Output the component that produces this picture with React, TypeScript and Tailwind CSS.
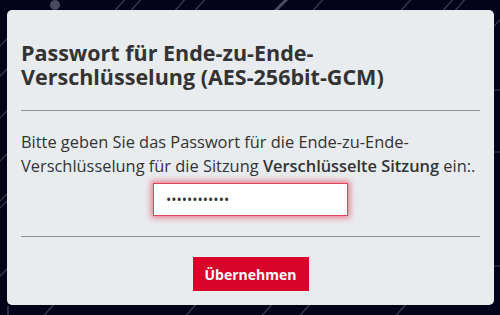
import React from 'react';

const BgLines: React.FC = () => (
  <svg className="absolute inset-0 w-full h-full" viewBox="0 0 500 315" aria-hidden>
    <g stroke="#3b3e55" strokeWidth="1.2" strokeLinecap="round">
      <line x1="112" y1="14" x2="128" y2="-4" />
      <line x1="128" y1="14" x2="144" y2="-4" />
      <line x1="172" y1="14" x2="188" y2="-4" />
      <line x1="192" y1="14" x2="208" y2="-4" />
      <line x1="310" y1="14" x2="326" y2="-4" />
      <line x1="398" y1="14" x2="414" y2="-4" />
      <line x1="440" y1="14" x2="456" y2="-4" />
      <line x1="452" y1="14" x2="468" y2="-4" />
      <line x1="40" y1="320" x2="56" y2="302" />
      <line x1="182" y1="320" x2="198" y2="302" />
      <line x1="258" y1="320" x2="274" y2="302" />
      <line x1="296" y1="320" x2="312" y2="302" />
      <line x1="392" y1="320" x2="408" y2="302" />
      <line x1="-4" y1="50" x2="10" y2="36" />
      <line x1="-4" y1="80" x2="10" y2="66" />
      <line x1="-4" y1="122" x2="10" y2="108" />
      <line x1="-4" y1="165" x2="10" y2="151" />
      <line x1="-4" y1="205" x2="10" y2="191" />
      <line x1="-4" y1="212" x2="10" y2="198" />
      <line x1="-4" y1="280" x2="10" y2="266" />
      <line x1="490" y1="30" x2="504" y2="16" />
      <line x1="492" y1="90" x2="504" y2="90" />
      <line x1="492" y1="152" x2="504" y2="152" />
      <line x1="492" y1="266" x2="504" y2="266" />
    </g>
    <line x1="272" y1="14" x2="290" y2="-4" stroke="#4a4d62" strokeWidth="3" />
    <circle cx="55" cy="5" r="5" fill="#474a5e" />
    <line x1="8" y1="306" x2="8" y2="315" stroke="#3b3e55" strokeWidth="1.5" />
  </svg>
);

export default function App() {
  return (
    <div
      className="relative w-[500px] h-[315px] overflow-hidden bg-[#03041a] pt-[10px] px-[7px]"
      style={{ fontFamily: '"Open Sans", "Noto Sans", sans-serif' }}
    >
      <BgLines />
      <div className="relative w-[487px] h-[295px] rounded-[5px] bg-[#e9ecef] pt-[31px] pl-[14px] pr-[14px] text-[#333333]">
        <h1 className="text-[21.5px] leading-[24px] font-bold">
          Passwort für Ende-zu-Ende-
          <br />
          Verschlüsselung (AES-256bit-GCM)
        </h1>
        <div className="mt-[21px] border-t border-[#8f8f8f]" />
        <p className="mt-[19px] text-[16.4px] leading-[24px]">
          Bitte geben Sie das Passwort für die Ende-zu-Ende-
          <br />
          Verschlüsselung für die Sitzung <span className="font-semibold">Verschlüsselte Sitzung</span> ein:.
        </p>
        <div className="flex justify-center mt-[5px]">
          <input
            type="password"
            readOnly
            value="123456789012"
            className="w-[195px] h-[33px] bg-white border border-[#e0455c] px-[12px] text-[14px] text-[#333] outline-none shadow-[0_0_6px_2px_rgba(225,35,65,0.55)]"
          />
        </div>
        <div className="mt-[20px] border-t border-[#8f8f8f]" />
        <div className="flex justify-center mt-[20px]">
          <button className="w-[116px] h-[34px] bg-[#d90429] text-white text-[14px] font-bold">
            Übernehmen
          </button>
        </div>
      </div>
    </div>
  );
}
